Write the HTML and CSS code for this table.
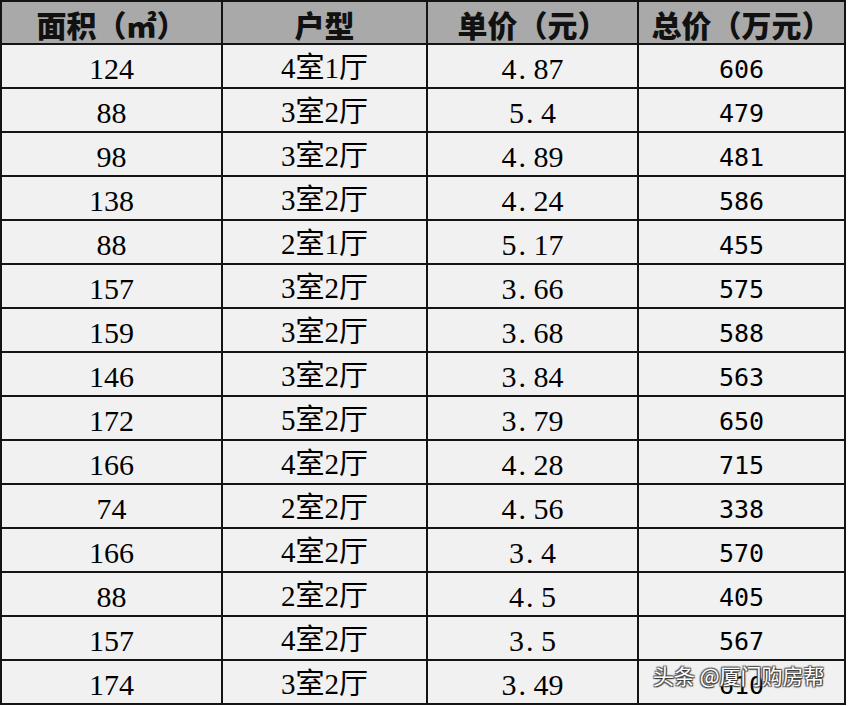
FILE: index.html
```html
<!DOCTYPE html>
<html lang="zh">
<head>
<meta charset="utf-8">
<link rel="stylesheet" href="styles.css">
</head>
<body>
<div class="wrap">
  <div class="grid">
    <div class="hd">面积（㎡）</div>
    <div class="hd">户型</div>
    <div class="hd">单价（元）</div>
    <div class="hd">总价（万元）</div>

    <div class="c num">124</div><div class="c type">4室1厅</div><div class="c num">4<span class="dot">.</span>87</div><div class="c sans">606</div>
    <div class="c num">88</div><div class="c type">3室2厅</div><div class="c num">5<span class="dot">.</span>4</div><div class="c sans">479</div>
    <div class="c num">98</div><div class="c type">3室2厅</div><div class="c num">4<span class="dot">.</span>89</div><div class="c sans">481</div>
    <div class="c num">138</div><div class="c type">3室2厅</div><div class="c num">4<span class="dot">.</span>24</div><div class="c sans">586</div>
    <div class="c num">88</div><div class="c type">2室1厅</div><div class="c num">5<span class="dot">.</span>17</div><div class="c sans">455</div>
    <div class="c num">157</div><div class="c type">3室2厅</div><div class="c num">3<span class="dot">.</span>66</div><div class="c sans">575</div>
    <div class="c num">159</div><div class="c type">3室2厅</div><div class="c num">3<span class="dot">.</span>68</div><div class="c sans">588</div>
    <div class="c num">146</div><div class="c type">3室2厅</div><div class="c num">3<span class="dot">.</span>84</div><div class="c sans">563</div>
    <div class="c num">172</div><div class="c type">5室2厅</div><div class="c num">3<span class="dot">.</span>79</div><div class="c sans">650</div>
    <div class="c num">166</div><div class="c type">4室2厅</div><div class="c num">4<span class="dot">.</span>28</div><div class="c sans">715</div>
    <div class="c num">74</div><div class="c type">2室2厅</div><div class="c num">4<span class="dot">.</span>56</div><div class="c sans">338</div>
    <div class="c num">166</div><div class="c type">4室2厅</div><div class="c num">3<span class="dot">.</span>4</div><div class="c sans">570</div>
    <div class="c num">88</div><div class="c type">2室2厅</div><div class="c num">4<span class="dot">.</span>5</div><div class="c sans">405</div>
    <div class="c num">157</div><div class="c type">4室2厅</div><div class="c num">3<span class="dot">.</span>5</div><div class="c sans">567</div>
    <div class="c num">174</div><div class="c type">3室2厅</div><div class="c num">3<span class="dot">.</span>49</div><div class="c sans">610</div>
  </div>
  <div class="watermark">头条 @厦门购房帮</div>
</div>
</body>
</html>
```

FILE: styles.css
```css
html, body {
  margin: 0;
  padding: 0;
  background: #ffffff;
}

.wrap {
  position: relative;
  width: 846px;
}

.grid {
  display: grid;
  grid-template-columns: 219px 203px 209px 205px;
  grid-template-rows: 41px repeat(15, 42px);
  gap: 2px;
  padding: 2px;
  background: #141414;
  width: 842px;
}

.hd {
  background: #a9a9a9;
  color: #111;
  font-family: "Noto Sans CJK SC", sans-serif;
  font-weight: 900;
  font-size: 30px;
  display: flex;
  align-items: center;
  justify-content: center;
  line-height: 1;
  padding-top: 2px;
}

.c {
  background: #f1f1f1;
  color: #000;
  display: flex;
  align-items: center;
  justify-content: center;
  line-height: 1;
  padding-top: 6px;
  box-sizing: border-box;
  white-space: pre;
}

.num {
  font-family: "Liberation Serif", serif;
  font-size: 30px;
}

.dot {
  display: inline-block;
  width: 17px;
  padding-left: 2px;
  box-sizing: border-box;
  text-align: left;
}

.type {
  font-family: "Liberation Serif", "Noto Sans CJK SC", serif;
  font-size: 29px;
  padding-top: 4px;
}

.type {
  letter-spacing: 0;
}

.sans {
  font-family: "DejaVu Sans Mono", monospace;
  font-size: 25px;
}

.watermark {
  position: absolute;
  left: 653px;
  top: 662px;
  font-family: "Noto Sans CJK SC", sans-serif;
  font-size: 21px;
  line-height: 26px;
  color: #ffffff;
  white-space: nowrap;
  text-shadow: 1px 1px 1px #333, -1px -1px 1px #555, 1px -1px 1px #555, -1px 1px 1px #555;
}
```
